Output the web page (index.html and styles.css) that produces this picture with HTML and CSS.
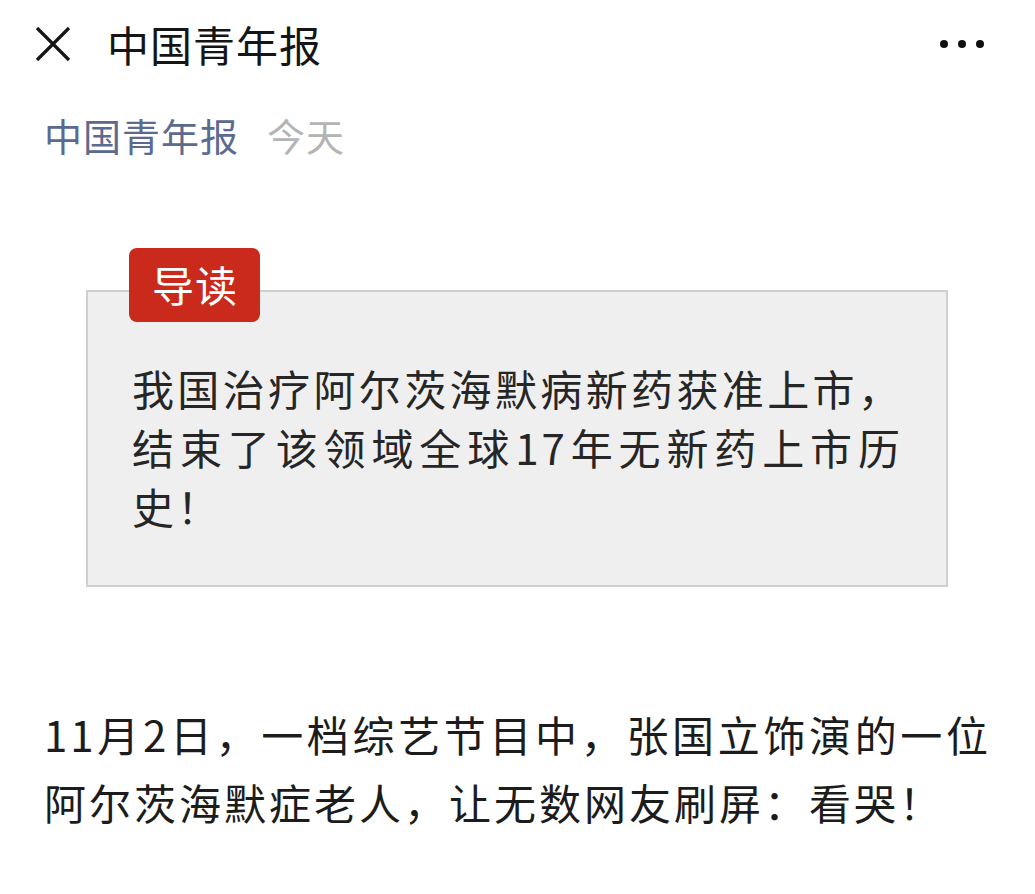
FILE: index.html
```html
<!DOCTYPE html>
<html lang="zh-CN">
<head>
<meta charset="utf-8">
<title>中国青年报</title>
<link rel="stylesheet" href="styles.css">
</head>
<body>
<header class="topbar">
  <svg class="close" width="36" height="36" viewBox="0 0 36 36" aria-hidden="true">
    <path d="M2 2 L34 34 M34 2 L2 34" stroke="#151515" stroke-width="3.2" stroke-linecap="butt" fill="none"/>
  </svg>
  <h1 class="title">中国青年报</h1>
  <div class="more" aria-label="更多">
    <span class="dot"></span><span class="dot"></span><span class="dot"></span>
  </div>
</header>
<main class="article">
  <div class="meta">
    <span class="account">中国青年报</span><span class="date">今天</span>
  </div>
  <section class="digest">
    <span class="badge">导读</span>
    <p class="digest-text">我国治疗阿尔茨海默病新药获准上市，结束了该领域全球17年无新药上市历史！</p>
  </section>
  <p class="lead">11月2日，一档综艺节目中，张国立饰演的一位阿尔茨海默症老人，让无数网友刷屏：看哭！</p>
</main>
</body>
</html>
```
FILE: styles.css
```css
html, body {
  margin: 0;
  padding: 0;
  background: #ffffff;
}
body {
  font-family: "Noto Sans CJK SC", "Noto Sans", sans-serif;
  color: #222222;
  width: 1035px;
  height: 894px;
  overflow: hidden;
}
.topbar {
  height: 88px;
  display: flex;
  align-items: center;
  padding: 0 51px 0 35px;
}
.close {
  flex: none;
  display: block;
}
.title {
  margin: 0 0 0 36px;
  font-size: 42px;
  font-weight: 400;
  letter-spacing: 1px;
  line-height: 88px;
  color: #151515;
  flex: 1;
}
.more {
  display: flex;
  gap: 10px;
  align-items: center;
}
.dot {
  width: 8px;
  height: 8px;
  border-radius: 50%;
  background: #111111;
}
.article {
  padding: 0 44px;
}
.meta {
  margin-top: 22px;
  line-height: 50px;
  font-size: 38px;
  letter-spacing: 1px;
}
.account {
  color: #5b6a8e;
}
.date {
  color: #b4b4b4;
  margin-left: 28px;
}
.digest {
  position: relative;
  margin: 130px 43px 0 42px;
  background: #efefef;
  border: 2px solid #cfcfcf;
  padding: 66px 43px 50px 44px;
}
.badge {
  position: absolute;
  top: -44px;
  left: 41px;
  height: 74px;
  line-height: 72px;
  padding: 0 22px 0 23px;
  background: #c92a1b;
  color: #ffffff;
  border-radius: 8px;
  font-size: 42px;
  letter-spacing: 1px;
}
.digest-text {
  margin: 0;
  font-size: 42px;
  line-height: 59px;
  letter-spacing: 3px;
  text-align: justify;
  color: #262626;
}
.lead {
  margin: 113px 0 0 0;
  font-size: 42px;
  line-height: 68px;
  letter-spacing: 3px;
  text-align: justify;
  color: #1c1c1c;
}
```
